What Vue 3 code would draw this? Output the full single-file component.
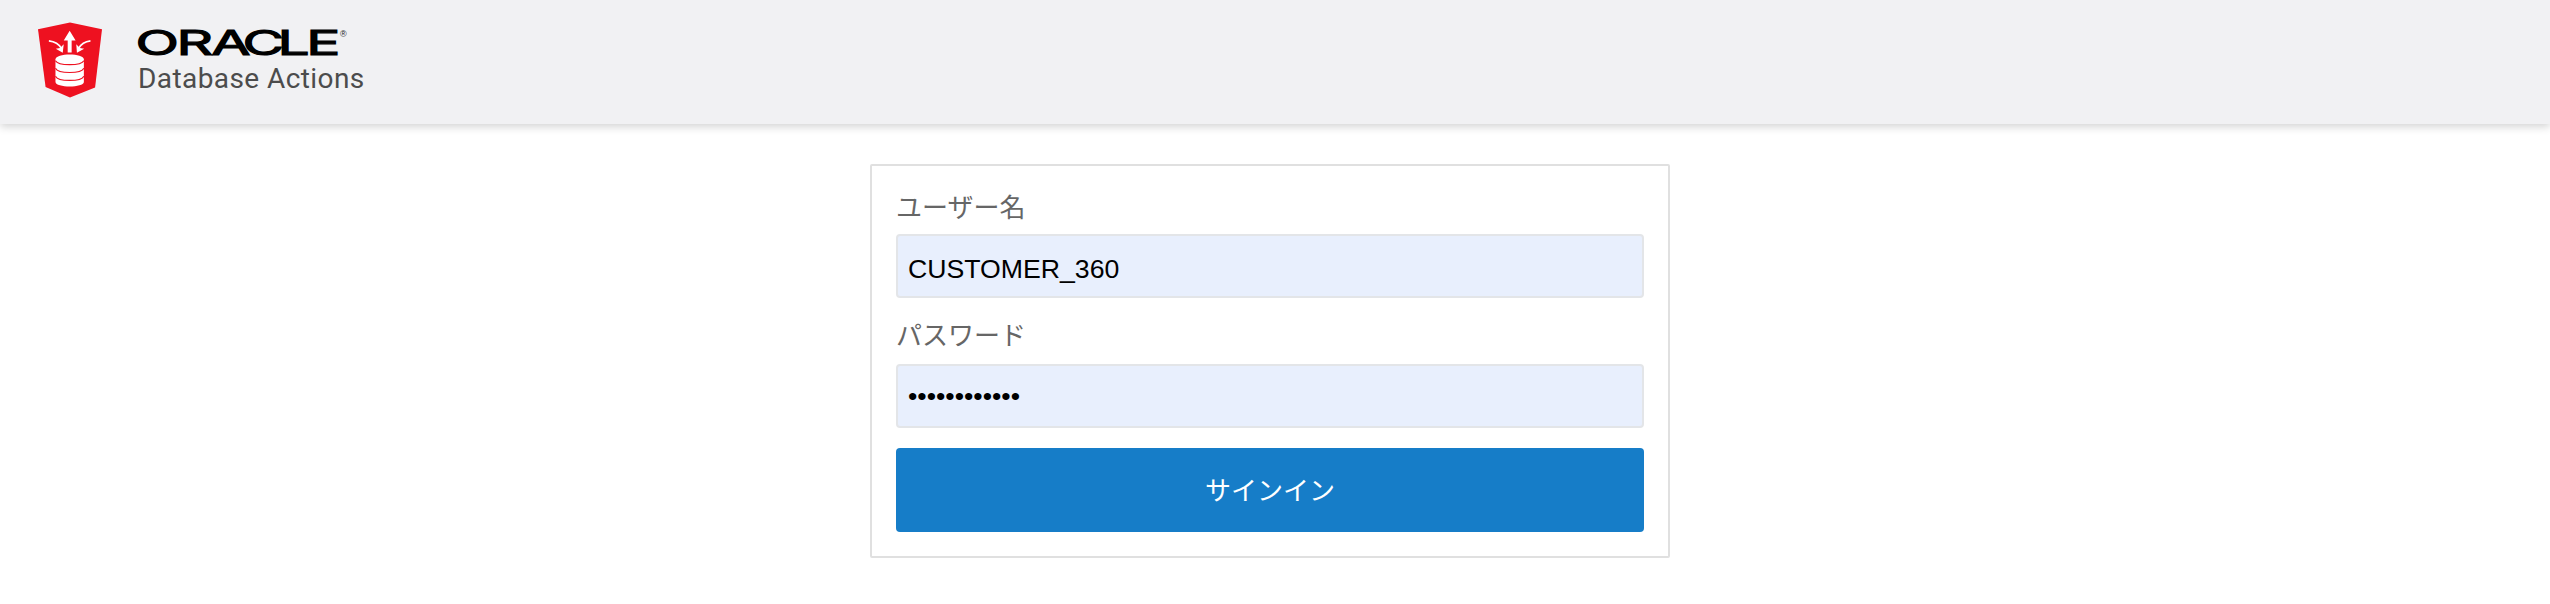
<script setup>
import { ref } from 'vue'

const username = ref('CUSTOMER_360')
const password = ref('customer-360')
</script>

<template>
  <div class="page">
    <header class="header">
      <svg class="shield" viewBox="0 0 200 234" aria-hidden="true">
        <path class="red" d="M100 3 197 24 176 200 100 231 26 199 3 24Z" />
        <path class="white" d="M99 28 117 58H105V94H93V58H81Z" />
        <path class="curve" d="M36 59Q63 62 74 82M162 59Q137 62 126 82" />
        <path class="white" d="M81 69 78 95 57 83 70 81ZM119 69 121 95 143 83 130 81Z" />
        <path class="white" d="M56 115C56 95 142 95 142 115V184C142 202 56 202 56 184Z" />
        <path class="ring" d="M56 119C64 135 134 135 142 119M56 142C64 159 134 159 142 142M56 166C64 183 134 183 142 166" />
      </svg>
      <div class="brand">
        <svg class="wordmark" viewBox="0 0 212 32" role="img" aria-label="ORACLE">
          <g transform="scale(1.65 1)">
            <text class="oracle" x="-1.5 23.3 44.4 63.3 84.6 102" y="28.4">ORACLE</text>
          </g>
          <text class="reg" x="202" y="9.5">®</text>
        </svg>
        <div class="product">Database Actions</div>
      </div>
    </header>

    <main>
      <form class="card" @submit.prevent>
        <label for="user">ユーザー名</label>
        <input id="user" v-model="username" type="text" autocomplete="off" spellcheck="false" />
        <label class="pass-label" for="pass">パスワード</label>
        <input id="pass" v-model="password" type="password" autocomplete="off" />
        <button type="submit">サインイン</button>
      </form>
    </main>
  </div>
</template>

<style>
body {
  margin: 0;
  background: #fff;
}
</style>

<style scoped>
.page {
  height: 604px;
  overflow: hidden;
  background: #fff;
  font-family: "Liberation Sans", "Noto Sans CJK JP", sans-serif;
}
.header {
  display: flex;
  box-sizing: border-box;
  height: 124px;
  padding: 21px 0 0 37px;
  background: #f1f1f3;
  box-shadow: 0 3px 8px rgba(0, 0, 0, 0.17);
}
.shield {
  width: 66px;
  height: 78px;
}
.red {
  fill: #ee1120;
}
.white {
  fill: #fff;
}
.curve {
  fill: none;
  stroke: #fff;
  stroke-width: 5;
}
.ring {
  fill: none;
  stroke: #ee1120;
  stroke-width: 3.5;
}
.brand {
  padding: 6px 0 0 35px;
}
.wordmark {
  display: block;
  width: 212px;
  height: 32px;
  overflow: visible;
}
.oracle {
  font: 400 34.5px Inter, sans-serif;
  fill: #000;
  stroke: #000;
  stroke-width: 1.5px;
  vector-effect: non-scaling-stroke;
}
.reg {
  font: 9px "Liberation Sans", sans-serif;
  fill: #222;
}
.product {
  margin-top: 3px;
  color: #4c4c4c;
  font: 28px/34px Roboto, sans-serif;
  letter-spacing: 0.42px;
  white-space: nowrap;
}
.card {
  display: flex;
  flex-direction: column;
  box-sizing: border-box;
  width: 800px;
  height: 394px;
  margin: 40px 0 0 870px;
  padding: 24px;
  border: 2px solid #e0e0e0;
  border-radius: 2px;
}
label {
  height: 34px;
  margin-bottom: 10px;
  color: #666;
  font: 26px/32px "Noto Sans CJK JP", sans-serif;
}
.pass-label {
  line-height: 28px;
}
input {
  box-sizing: border-box;
  height: 64px;
  margin: 0 0 22px;
  padding: 6px 10px 0;
  border: 2px solid #e3e5e8;
  border-radius: 4px;
  outline: none;
  background: #e8effd;
  color: #000;
  font: 26.67px "Liberation Sans", sans-serif;
}
#pass {
  margin-bottom: 20px;
  padding-top: 1px;
}
button {
  height: 84px;
  padding: 0 0 4px;
  border: 0;
  border-radius: 4px;
  background: #167dc8;
  color: #fff;
  font: 26px "Noto Sans CJK JP", sans-serif;
}
</style>
